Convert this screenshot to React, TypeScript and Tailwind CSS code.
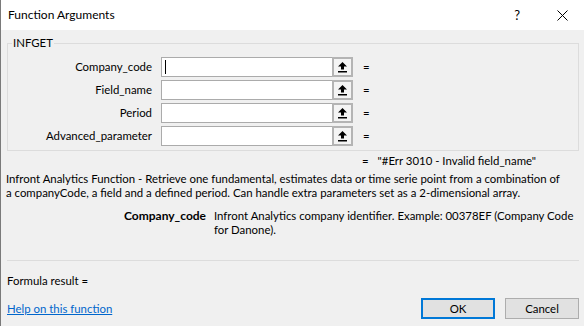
import React from "react";

const fields = ["Company_code", "Field_name", "Period", "Advanced_parameter"];

function CollapseIcon() {
  return (
    <svg width="11" height="12" viewBox="0 0 11 12" aria-hidden="true">
      <path d="M5.5 1 L1 5.5 L4 5.5 L4 8.5 L7 8.5 L7 5.5 L10 5.5 Z" fill="#000" />
      <rect x="1" y="10" width="9" height="1.5" fill="#000" />
    </svg>
  );
}

function ArgRow({ label, active }: { label: string; active?: boolean }) {
  return (
    <div className="flex h-[20px] items-center">
      <div className="w-[144px] whitespace-nowrap text-right">{label}</div>
      <div className="ml-[9px] flex h-[20px] w-[171px] items-center border border-r-0 border-[#ababab] bg-white pl-[3px]">
        {active && <div className="h-[14px] w-px bg-black" />}
      </div>
      <div className="flex h-[20px] w-[21px] items-center justify-center border-2 border-[#b4b4b4] bg-[#f4f4f4]">
        <CollapseIcon />
      </div>
      <div className="ml-[10px]">=</div>
    </div>
  );
}

export default function App() {
  return (
    <div className="h-[326px] w-[584px] overflow-hidden border-l border-[#7a7a7a] bg-[#f0f0f0] font-['Lato',sans-serif] text-[11.4px] leading-[14px] text-black">
      <div className="flex h-[30px] items-center bg-white pl-[7px]">
        <span className="text-[12px]">Function Arguments</span>
        <span className="ml-auto mr-[37px] text-[13px]">?</span>
        <svg width="11" height="11" viewBox="0 0 11 11" className="mr-[16px]" aria-hidden="true">
          <path d="M0.5 0.5 L10.5 10.5 M10.5 0.5 L0.5 10.5" stroke="#000" strokeWidth="1" />
        </svg>
      </div>

      <div className="relative ml-[6px] mr-[5px] mt-[13px] h-[108px] border border-[#dcdcdc] pt-[13px]">
        <span className="absolute -top-[8px] left-[4px] bg-[#f0f0f0] px-px">INFGET</span>
        <div className="flex flex-col gap-[3px]">
          {fields.map((f, i) => (
            <ArgRow key={f} label={f} active={i === 0} />
          ))}
        </div>
      </div>

      <div className="mt-[3px] flex gap-[9px] whitespace-nowrap pl-[361px]">
        <span>=</span>
        <span>"#Err 3010 - Invalid field_name"</span>
      </div>

      <p className="mt-[4px] whitespace-nowrap pl-[5px]">
        Infront Analytics Function - Retrieve one fundamental, estimates data or time serie point from a combination of
        <br />
        a companyCode, a field and a defined period. Can handle extra parameters set as a 2-dimensional array.
      </p>

      <div className="mt-[9px] flex">
        <div className="w-[213px] whitespace-nowrap pr-[8px] text-right text-[12px] font-bold">Company_code</div>
        <div className="whitespace-nowrap">
          Infront Analytics company identifier. Example: 00378EF (Company Code
          <br />
          for Danone).
        </div>
      </div>

      <div className="ml-[6px] mr-[5px] mt-[23px] border-t border-[#dcdcdc]" />

      <div className="mt-[13px] pl-[6px]">Formula result =</div>

      <div className="mt-[10px] flex h-[21px] items-center pl-[6px] pr-[5px]">
        <a href="#" className="text-[#0066cc] underline">
          Help on this function
        </a>
        <button className="ml-auto h-[21px] w-[74px] border-2 border-[#0078d7] bg-[#e1e1e1]">OK</button>
        <button className="ml-[10px] h-[21px] w-[74px] border border-[#adadad] bg-[#e1e1e1]">Cancel</button>
      </div>
    </div>
  );
}
